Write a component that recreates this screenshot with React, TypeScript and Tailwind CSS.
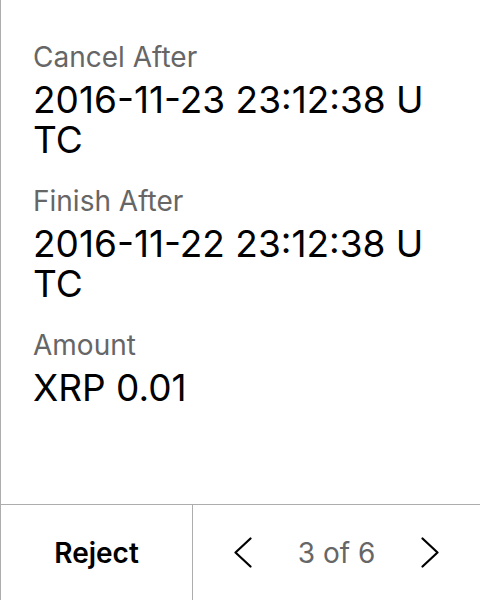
const rows = [
  { label: "Cancel After", value: "2016-11-23 23:12:38 UTC" },
  { label: "Finish After", value: "2016-11-22 23:12:38 UTC" },
  { label: "Amount", value: "XRP 0.01" },
];

function Chevron({ dir }: { dir: "left" | "right" }) {
  return (
    <svg width="18" height="31" viewBox="0 0 18 31" fill="none" stroke="currentColor" strokeWidth="2.2" strokeLinecap="round" strokeLinejoin="round">
      {dir === "left" ? <polyline points="16.5,1.5 1.5,15.5 16.5,29.5" /> : <polyline points="1.5,1.5 16.5,15.5 1.5,29.5" />}
    </svg>
  );
}

export default function App() {
  return (
    <div
      className="flex h-[600px] w-[480px] flex-col border-l border-[#adadad] bg-white text-black"
      style={{ fontFamily: "Inter, 'Noto Sans', sans-serif" }}
    >
      <div className="flex-1 pl-8 pr-[50px] pt-[40px]">
        {rows.map((r) => (
          <div key={r.label} className="mb-[24px]">
            <div className="text-[28px] leading-[34px] text-[#666]">{r.label}</div>
            <div className="mt-[6px] break-all text-[37px] leading-[40px]">{r.value}</div>
          </div>
        ))}
      </div>
      <div className="flex h-[96px] border-t border-[#adadad]">
        <button className="flex w-[192px] items-center justify-center border-r border-[#adadad] text-[28px] font-semibold">
          Reject
        </button>
        <div className="flex flex-1 items-center justify-center gap-[46px]">
          <Chevron dir="left" />
          <span className="text-[28px] text-[#666]">3 of 6</span>
          <Chevron dir="right" />
        </div>
      </div>
    </div>
  );
}
